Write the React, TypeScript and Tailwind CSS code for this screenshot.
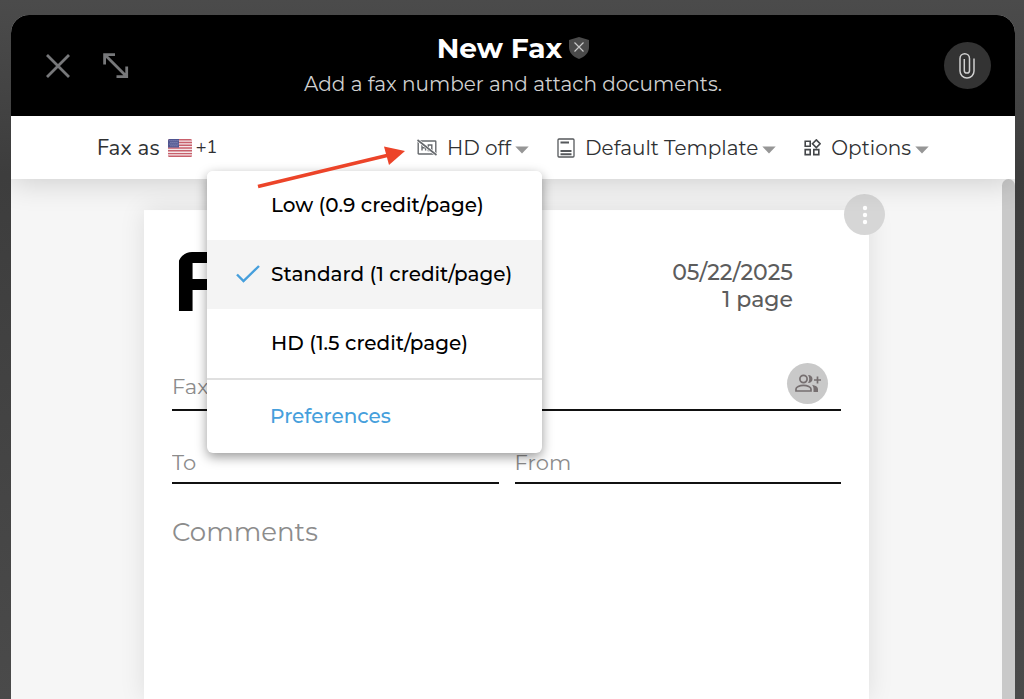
import { useState } from "react";

const QUALITIES = [
  { id: "low", label: "Low (0.9 credit/page)" },
  { id: "standard", label: "Standard (1 credit/page)" },
  { id: "hd", label: "HD (1.5 credit/page)" },
];

function Caret() {
  return (
    <svg width="14" height="8" viewBox="0 0 14 8" className="mt-1 shrink-0 fill-[#969696]" aria-hidden="true">
      <path d="M0.3 0.5h13.4L7 7.5z" />
    </svg>
  );
}

function FlagUS() {
  return (
    <svg width="24" height="18" viewBox="0 0 24 18" className="shrink-0" aria-hidden="true">
      <clipPath id="flag">
        <rect width="24" height="18" rx="1.5" />
      </clipPath>
      <g clipPath="url(#flag)">
        <rect width="24" height="18" fill="#f4e6e8" />
        <path
          d="M0 .7h24M0 3.5h24M0 6.3h24M0 9h24M0 11.8h24M0 14.6h24M0 17.3h24"
          stroke="#c8606c"
          strokeWidth="1.4"
        />
        <rect width="11" height="8.5" fill="#4f5590" />
        <path
          d="M1.5 1.7h9M2.5 3.4h8M1.5 5.1h9M2.5 6.8h8"
          stroke="#b9bddb"
          strokeWidth="0.8"
          strokeDasharray="0.9 1.1"
        />
      </g>
    </svg>
  );
}

function HdOffIcon() {
  return (
    <svg width="20" height="17" viewBox="0 0 20 17" fill="none" stroke="#66696d" aria-hidden="true">
      <rect x="1.2" y="2" width="17.6" height="13" rx="0.6" strokeWidth="1.4" />
      <path d="M5 11.5V6M8.6 11.5V6M5 8.8h3.6" strokeWidth="1.4" />
      <path d="M11.3 6h3.5v5.5h-3.5zM13.5 10l1.8 2.5" strokeWidth="1.4" />
      <path d="M0.5 1l19 15" stroke="#fff" strokeWidth="3" />
      <path d="M0.5 1l19 15" strokeWidth="1.6" />
    </svg>
  );
}

function TemplateIcon() {
  return (
    <svg width="18" height="20" viewBox="0 0 18 20" fill="none" stroke="#55585b" aria-hidden="true">
      <rect x="1" y="1" width="16" height="18" rx="1" strokeWidth="1.3" />
      <path d="M3.5 4.5H12M3.5 13h11M3.5 16.3h11" strokeWidth="2" />
    </svg>
  );
}

function OptionsIcon() {
  return (
    <svg width="17" height="17" viewBox="0 0 17 17" fill="none" stroke="#44474a" strokeWidth="1.6" aria-hidden="true">
      <path d="M1.2 2.2h5v5h-5zM1.2 10.6h5v5h-5zM9.8 10.6h5v5h-5zM12.3 .9l3.8 3.8-3.8 3.8-3.8-3.8z" />
    </svg>
  );
}

function ShieldIcon() {
  return (
    <svg width="20" height="22" viewBox="0 0 20 22" fill="none" aria-hidden="true">
      <path d="M10 0l10 3v7c0 5.5-4 9.8-10 12C4 19.8 0 15.5 0 10V3z" fill="#4a4a4a" />
      <path d="M5.5 5.5l9 9M14.5 5.5l-9 9" stroke="#c8c8c8" strokeWidth="1.2" />
    </svg>
  );
}

function Toolbar() {
  const [quality, setQuality] = useState("standard");
  const [open, setOpen] = useState(true);

  return (
    <div className="relative z-10 flex h-[63px] items-center justify-between bg-white px-[86px] text-[20px] text-[#2f3133] shadow-[0_4px_30px_rgba(0,0,0,0.16)]">
      <button className="flex items-center gap-1 font-['Nunito','Noto_Sans',sans-serif]">
        <span className="mr-1 text-[22px] leading-[30px]">Fax as</span>
        <FlagUS />
        <span className="text-[18px]">+1</span>
      </button>

      <div className="flex items-center gap-7">
        <div className="relative">
          <button
            onClick={() => setOpen(!open)}
            aria-haspopup="menu"
            aria-expanded={open}
            className="flex items-center gap-1"
          >
            <HdOffIcon />
            <span className="ml-[6px]">HD off</span>
            <Caret />
          </button>
          {open && (
            <div
              role="menu"
              className="absolute top-[38px] -right-[13px] w-[335px] overflow-hidden rounded-md bg-white text-[20px] font-medium text-black shadow-[0_4px_12px_rgba(0,0,0,0.4)]"
            >
              {QUALITIES.map((q) => (
                <button
                  key={q.id}
                  role="menuitemradio"
                  aria-checked={quality === q.id}
                  onClick={() => setQuality(q.id)}
                  className={`flex h-[69px] w-full items-center whitespace-nowrap pl-7 ${
                    quality === q.id ? "bg-[#f4f4f4]" : "bg-white"
                  }`}
                >
                  <span className="w-9 shrink-0">
                    {quality === q.id && (
                      <svg width="26" height="20" viewBox="0 0 26 20" fill="none" aria-hidden="true">
                        <path d="M2 10.5L8.5 17L24 2" stroke="#469fdc" strokeWidth="2.4" />
                      </svg>
                    )}
                  </span>
                  {q.label}
                </button>
              ))}
              <button
                role="menuitem"
                className="h-[75px] w-full border-t-2 border-[#e0e0e0] pl-[63px] text-left text-[#469fdc]"
              >
                Preferences
              </button>
            </div>
          )}
        </div>

        <button className="flex items-center gap-1">
          <TemplateIcon />
          <span className="ml-[6px]">Default Template</span>
          <Caret />
        </button>
        <button className="flex items-center gap-1">
          <OptionsIcon />
          <span className="ml-[6px]">Options</span>
          <Caret />
        </button>
      </div>

      {/* Pointer to the quality menu */}
      <svg
        width="150"
        height="48"
        viewBox="0 0 150 48"
        className="pointer-events-none absolute top-[26px] left-[245px] z-20"
        aria-hidden="true"
      >
        <path d="M2 44.5L133 13" stroke="#ec4429" strokeWidth="3.5" />
        <path d="M149 9L128 4.5L133 23z" fill="#ec4429" />
      </svg>
    </div>
  );
}

function CoverSheet() {
  const field =
    "w-full border-b-2 border-[#111] bg-transparent text-[21px] text-[#333] outline-none placeholder:text-[#8c8c8c]";

  return (
    <section className="relative mx-auto min-h-[489px] w-full max-w-[725px] bg-white px-7 pt-[34px] shadow-[0_0_24px_rgba(0,0,0,0.1)]">
      <button
        aria-label="Cover sheet options"
        className="absolute -top-4 -right-4 flex size-[41px] items-center justify-center rounded-full bg-[#d6d6d6]"
      >
        <svg width="6" height="20" viewBox="0 0 6 20" fill="#fff" aria-hidden="true">
          <circle cx="3" cy="3" r="2.2" />
          <circle cx="3" cy="10" r="2.2" />
          <circle cx="3" cy="17" r="2.2" />
        </svg>
      </button>

      <div className="flex h-[119px] items-start justify-between pr-12">
        <div className="text-[84px] leading-[75px] font-bold text-black [clip-path:inset(8px_0_0_6px_round_14px_0_0_0)]">
          F
        </div>
        <div className="pt-[15px] text-right text-[22px] leading-[27px] font-medium text-[#5c5c5c]">
          <p>05/22/2025</p>
          <p>1 page</p>
        </div>
      </div>

      <div className="relative">
        <input aria-label="Fax number" placeholder="Fax number" className={`${field} h-12`} />
        <button
          aria-label="Add contact"
          className="absolute top-0 right-[13px] flex size-[41px] items-center justify-center rounded-full bg-[#c9c9c9]"
        >
          <svg width="26" height="19" viewBox="0 0 26 19" fill="none" stroke="#766f70" strokeWidth="1.7" aria-hidden="true">
            <circle cx="8.5" cy="5" r="3.6" />
            <path d="M1 17v-2c0-2 3.5-3.6 7.5-3.6S16 13 16 15v2z" />
            <path
              d="M13 1c3 0 4.5 1.7 4.5 4S16 9 13 9c1.7-2.4 1.7-5.6 0-8zM17 10.8c3.5.7 6 2 6 4.2v3h-4.5v-3c0-1.7-.5-3-1.5-4.2z"
              fill="#766f70"
              stroke="none"
            />
            <path d="M22.5 2.5v7M19 6h7" />
          </svg>
        </button>
      </div>

      <div className="mt-[31px] grid grid-cols-2 gap-4">
        <input aria-label="To" placeholder="To" className={`${field} h-[42px]`} />
        <input aria-label="From" placeholder="From" className={`${field} h-[42px]`} />
      </div>

      <textarea
        aria-label="Comments"
        placeholder="Comments"
        className="mt-7 block h-[150px] w-full resize-none text-[26px] leading-[40px] text-[#333] outline-none placeholder:text-[#8c8c8c]"
      />
    </section>
  );
}

export default function App() {
  return (
    <div className="flex h-screen flex-col overflow-hidden bg-linear-to-b from-[#4b4b4b] via-[#3d3d3d] via-25% to-[#4a4a4a] pt-[15px] pr-[9px] pl-[11px] font-['Montserrat','Inter',sans-serif]">
      <div className="flex flex-1 flex-col overflow-hidden rounded-t-[18px] bg-[#f6f6f6]">
        <header className="flex h-[101px] shrink-0 items-center justify-between bg-black pr-6 pl-[34px]">
          <div className="flex w-[90px] items-center gap-8">
            <button aria-label="Close">
              <svg width="26" height="26" viewBox="0 0 26 26" stroke="#77787a" strokeWidth="2.8" aria-hidden="true">
                <path d="M2 2l22 22M24 2L2 24" />
              </svg>
            </button>
            <button aria-label="Expand">
              <svg width="26" height="26" viewBox="0 0 26 26" fill="none" stroke="#77787a" strokeWidth="2.8" aria-hidden="true">
                <path d="M1.6 11.5V1.6H12M1.6 1.6l22 22M23.7 13.5v10.2H13.5" />
              </svg>
            </button>
          </div>

          <div className="text-center">
            <h1 className="flex items-center justify-center gap-[7px] text-[28px] leading-[36px] font-bold text-white">
              New Fax
              <ShieldIcon />
            </h1>
            <p className="text-[20px] leading-[36px] text-[#d0d0d0]">Add a fax number and attach documents.</p>
          </div>

          <div className="flex w-[100px] justify-end">
            <button
              aria-label="Attach documents"
              className="flex size-[47px] items-center justify-center rounded-full bg-[#333]"
            >
              <svg width="16" height="26" viewBox="0 0 16 26" fill="none" stroke="#d0d0d0" strokeWidth="1.5" aria-hidden="true">
                <path d="M15 5.5V18a7 7 0 0 1-14 0V5.5a4.7 4.7 0 0 1 9.5 0V17.5a2.6 2.6 0 0 1-5.2 0V6" />
              </svg>
            </button>
          </div>
        </header>

        <Toolbar />

        <div className="flex flex-1">
          <main className="flex-1 pt-[31px]">
            <CoverSheet />
          </main>
          <div className="w-[13px] rounded-t-full bg-[#c9c9c9]" />
        </div>
      </div>
    </div>
  );
}
